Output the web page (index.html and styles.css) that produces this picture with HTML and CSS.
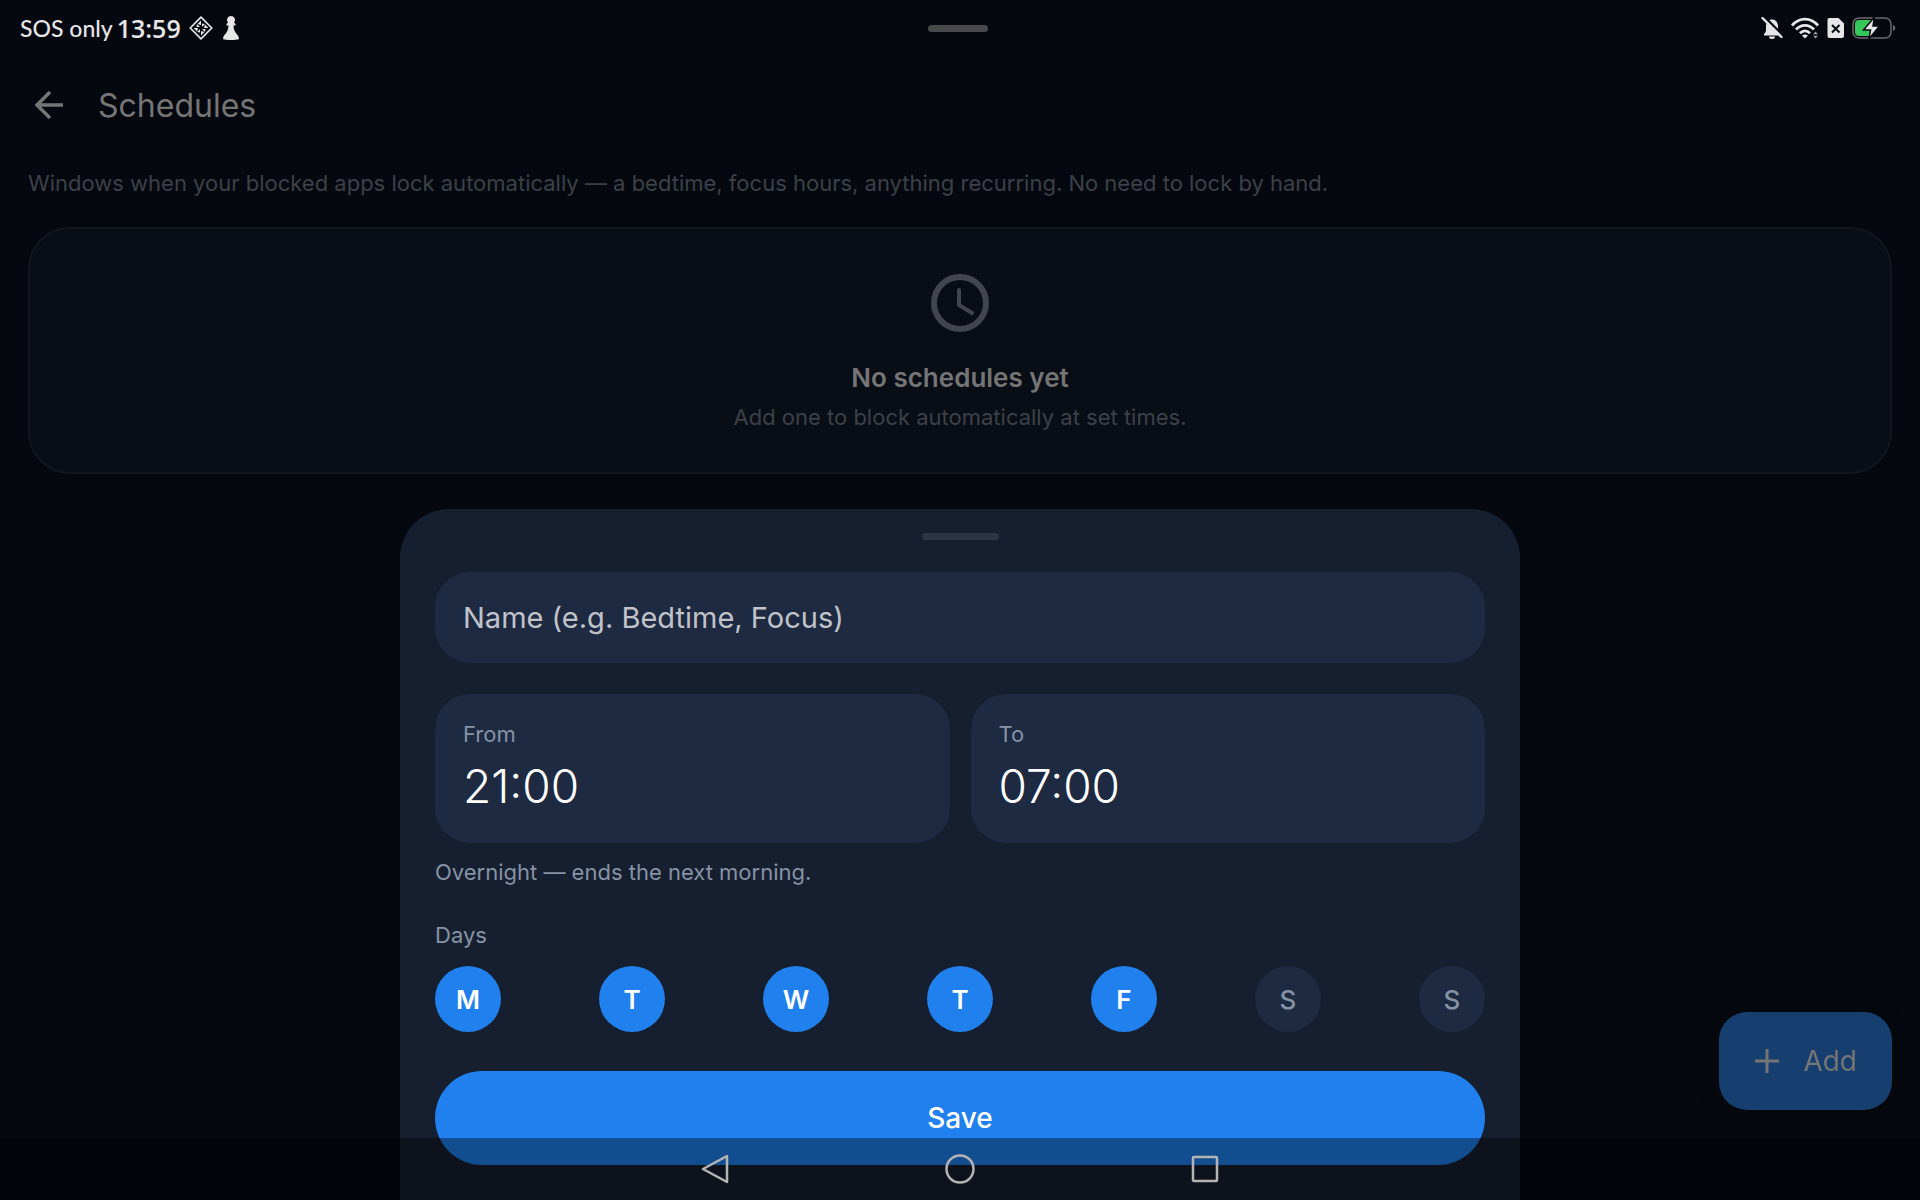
FILE: index.html
```html
<!DOCTYPE html>
<html lang="en">
<head>
	<meta charset="UTF-8">
	<title>Schedules</title>
	<link rel="stylesheet" href="styles.css">
</head>
<body>
	<div class="status-bar">
		<div class="status-left">
			<span class="carrier">SOS only</span>
			<span class="clock">13:59</span>
			<svg class="status-diamond" viewBox="0 0 24 24" width="24" height="24">
				<path d="M12 1.200 22.800 12 12 22.800 1.200 12z" fill="none" stroke="currentColor" stroke-width="1.700" stroke-linejoin="round"/>
				<path d="M12 4.500v4.500L8.500 8zM19.500 12H15l1-3.500zM12 19.500V15l3.500 1zM4.500 12H9l-1 3.500zM13 7.500l3 .5-3 3zM16.500 13l-.5 3-3-3zM11 16.500 8 16l3-3zM7.500 11 8 8l3 3z" fill="currentColor"/>
			</svg>
			<svg class="status-pawn" viewBox="0 0 16 24" width="16" height="24">
				<path d="M8 0a4 4 0 0 1 3 6.600L12.500 8v1.500h-2c0 4 1.500 7 4 9.500 1 1 1.500 2.500 1.300 4.200C13 24.200 3 24.200.2 23.200 0 21.500.5 20 1.500 19c2.500-2.500 4-5.500 4-9.500h-2V8L5 6.600A4 4 0 0 1 8 0z" fill="currentColor"/>
			</svg>
		</div>
		<div class="drag-pill"></div>
		<div class="status-right">
			<svg viewBox="0 0 22 22" width="22" height="22">
				<path d="M3 17c1.500-1.300 2-2.500 2-5V9c0-3.800 2.700-6.500 6-6.500S17 5.200 17 9v3c0 2.500.5 3.700 2 5v1.500H3z" fill="currentColor"/>
				<path d="M8 19.500h6a3 2.500 0 0 1-6 0z" fill="currentColor"/>
				<path d="M3.500 0 22 18.500" stroke="#05080f" stroke-width="2.500"/>
				<path d="M1.500 1 20.500 20" stroke="currentColor" stroke-width="2.400" stroke-linecap="round"/>
			</svg>
			<svg viewBox="0 0 30 22" width="30" height="22">
				<path d="M2 8.500C9.500 0 20.500 0 28 8.500M6 12.500c5-5.600 13-5.600 18 0M10 16.200c3-3.100 7-3.100 10 0" fill="none" stroke="currentColor" stroke-width="2.800"/>
				<path d="M12 18.500c2-1.500 4-1.500 6 0L15 21.500z" fill="currentColor"/>
				<path d="M25.500 14.500 28 17.300h-5zM25.500 21.500 23 18.700h5z" fill="#999b9e"/>
			</svg>
			<svg viewBox="0 0 18 22" width="18" height="22">
				<path d="M2 1h9.500L17 6.500V19a2 2 0 0 1-2 2H2.500a2 2 0 0 1-2-2V3A2 2 0 0 1 2 1z" fill="currentColor"/>
				<path d="M5 8l7.500 7.500M12.500 8 5 15.500" stroke="#05080f" stroke-width="2"/>
			</svg>
			<svg viewBox="0 0 44 22" width="44" height="22">
				<rect x="1" y="1" width="38" height="20" rx="6" fill="none" stroke="#696b70" stroke-width="1.500"/>
				<path d="M41 8c3 1 3 5 0 6z" fill="#696b70"/>
				<path d="M7 3h12v16H7a4 4 0 0 1-4-4V7a4 4 0 0 1 4-4z" fill="#35c759"/>
				<path d="M22.500 0 11.500 13h7L17 22 27.500 9H21z" fill="currentColor" stroke="#05080f" stroke-width="1.500"/>
			</svg>
		</div>
	</div>

	<main class="page">
		<header class="app-bar">
			<button class="back" aria-label="Back">
				<svg viewBox="0 0 28 28" width="28" height="28">
					<path d="M28 14H2M15 1 2 14l13 13" fill="none" stroke="currentColor" stroke-width="3.500"/>
				</svg>
			</button>
			<h1>Schedules</h1>
		</header>
		<p class="intro">Windows when your blocked apps lock automatically — a bedtime, focus hours, anything recurring. No need to lock by hand.</p>
		<section class="empty-card">
			<svg viewBox="0 0 58 58" width="58" height="58">
				<circle cx="29" cy="29" r="26" fill="none" stroke="currentColor" stroke-width="6"/>
				<path d="M28 16v15l13 8" fill="none" stroke="currentColor" stroke-width="4" stroke-linecap="round" stroke-linejoin="round"/>
			</svg>
			<h2>No schedules yet</h2>
			<p>Add one to block automatically at set times.</p>
		</section>
	</main>

	<button class="add">
		<svg viewBox="0 0 24 24" width="24" height="24">
			<path d="M12 0v24M0 12h24" stroke="currentColor" stroke-width="3"/>
		</svg>
		Add
	</button>

	<form class="sheet">
		<div class="sheet-handle"></div>
		<input type="text" class="name-input" aria-label="Name" placeholder="Name (e.g. Bedtime, Focus)">
		<div class="times">
			<button type="button" class="time">
				<span class="label">From</span>
				<span class="value">21:00</span>
			</button>
			<button type="button" class="time">
				<span class="label">To</span>
				<span class="value">07:00</span>
			</button>
		</div>
		<p class="note">Overnight — ends the next morning.</p>
		<p class="days-label" id="days-label">Days</p>
		<div class="days" role="group" aria-labelledby="days-label">
			<button type="button" class="day on" aria-pressed="true">M</button>
			<button type="button" class="day on" aria-pressed="true">T</button>
			<button type="button" class="day on" aria-pressed="true">W</button>
			<button type="button" class="day on" aria-pressed="true">T</button>
			<button type="button" class="day on" aria-pressed="true">F</button>
			<button type="button" class="day" aria-pressed="false">S</button>
			<button type="button" class="day" aria-pressed="false">S</button>
		</div>
		<button type="button" class="save">Save</button>
	</form>

	<nav class="nav-bar">
		<button aria-label="Back">
			<svg viewBox="0 0 32 32" width="32" height="32">
				<path d="M28 3v26L4 16z" fill="none" stroke="currentColor" stroke-width="2.500" stroke-linejoin="round"/>
			</svg>
		</button>
		<button aria-label="Home">
			<svg viewBox="0 0 32 32" width="32" height="32">
				<circle cx="16" cy="16" r="13.500" fill="none" stroke="currentColor" stroke-width="2.500"/>
			</svg>
		</button>
		<button aria-label="Recent apps">
			<svg viewBox="0 0 32 32" width="32" height="32">
				<rect x="4" y="4" width="24" height="24" rx="1" fill="none" stroke="currentColor" stroke-width="2.500"/>
			</svg>
		</button>
	</nav>
</body>
</html>
```
FILE: styles.css
```css
* {
	box-sizing: border-box;
}
body {
	margin: 0;
	min-height: 100vh;
	overflow: hidden;
	font-family: Inter, "Noto Sans", sans-serif;
	background-color: #05080f;
	color: #757575;
}
h1, h2, p {
	margin: 0;
}
button, input {
	margin: 0;
	padding: 0;
	border: 0;
	background: none;
	color: inherit;
	font: inherit;
}
svg {
	display: block;
	flex: none;
}

/* status bar */
.status-bar {
	display: grid;
	grid-template-columns: 1fr auto 1fr;
	align-items: center;
	height: 56px;
	padding: 0 24px 0 20px;
	color: #e6e6e7;
}
.status-left, .status-right {
	display: flex;
	align-items: center;
}
.carrier {
	margin-right: 4px;
	font-family: Lato, sans-serif;
	font-size: 23px;
	font-weight: 500;
}
.clock {
	font-family: "Open Sans", sans-serif;
	font-size: 25px;
	font-weight: 600;
}
.status-diamond {
	margin: 0 10px 0 8px;
}
.drag-pill {
	width: 60px;
	height: 7px;
	border-radius: 4px;
	background-color: #49494b;
}
.status-right {
	justify-content: flex-end;
	gap: 7px;
}

/* page behind the sheet */
.page {
	padding: 0 28px;
}
.app-bar {
	display: flex;
	align-items: center;
	gap: 35px;
	height: 98px;
	padding-left: 7px;
}
.app-bar h1 {
	font-size: 32px;
	font-weight: 400;
}
.intro {
	padding-top: 13px;
	font-size: 22px;
	line-height: 32px;
	color: #3c4149;
}
.empty-card {
	display: flex;
	flex-direction: column;
	align-items: center;
	margin-top: 28px;
	padding: 45px 28px 39px;
	border: 2px solid #12161d;
	border-radius: 42px;
	background-color: #090d15;
	color: #42454e;
}
.empty-card h2 {
	margin-top: 28px;
	font-size: 26px;
	font-weight: 600;
	line-height: 36px;
	color: #757575;
}
.empty-card p {
	margin-top: 5px;
	font-size: 22px;
	line-height: 32px;
	color: #3c4149;
}

.add {
	position: fixed;
	right: 28px;
	bottom: 90px;
	display: flex;
	align-items: center;
	gap: 24px;
	height: 98px;
	padding: 0 35px 0 36px;
	border-radius: 28px;
	background-color: #163f6f;
	box-shadow: 0 6px 16px #07090b;
	font-size: 28px;
}

/* bottom sheet */
.sheet {
	position: fixed;
	left: 50%;
	bottom: 0;
	display: flex;
	flex-direction: column;
	width: 1120px;
	max-width: 100%;
	padding: 24px 35px 35px;
	border-radius: 49px 49px 0 0;
	background-color: #161f2f;
	color: #fff;
	transform: translateX(-50%);
}
.sheet-handle {
	align-self: center;
	width: 77px;
	height: 7px;
	border-radius: 4px;
	background-color: #2d3543;
}
.name-input {
	height: 91px;
	margin-top: 32px;
	padding: 0 28px;
	border-radius: 35px;
	background-color: #1e2a41;
	font-size: 29px;
}
.name-input::placeholder {
	color: #c1c3ca;
	opacity: 1;
}
.times {
	display: grid;
	grid-template-columns: 1fr 1fr;
	gap: 21px;
	margin-top: 31px;
}
.time {
	display: flex;
	flex-direction: column;
	padding: 24px 28px 25px;
	border-radius: 35px;
	background-color: #1e2a41;
	text-align: left;
}
.label, .note, .days-label {
	font-size: 22px;
	line-height: 32px;
	color: #8593a5;
}
.value {
	margin-top: 4px;
	font-size: 46px;
	font-weight: 300;
	line-height: 64px;
}
.note {
	margin-top: 13px;
}
.days-label {
	margin-top: 31px;
}
.days {
	display: flex;
	justify-content: space-between;
	margin-top: 15px;
}
.day {
	width: 66px;
	height: 66px;
	border-radius: 50%;
	background-color: #1e2a41;
	color: #8593a5;
	font-size: 26px;
	font-weight: 500;
}
.day.on {
	background-color: #1f80ee;
	color: #fff;
	font-weight: 600;
}
.save {
	height: 94px;
	margin-top: 39px;
	border-radius: 47px;
	background-color: #1f80ee;
	font-size: 28px;
	font-weight: 500;
}

/* system navigation */
.nav-bar {
	position: fixed;
	right: 0;
	bottom: 0;
	left: 0;
	display: flex;
	justify-content: center;
	align-items: center;
	gap: 213px;
	height: 62px;
	background-color: rgba(0, 0, 0, 0.4);
	color: #b4b4b4;
}
```
